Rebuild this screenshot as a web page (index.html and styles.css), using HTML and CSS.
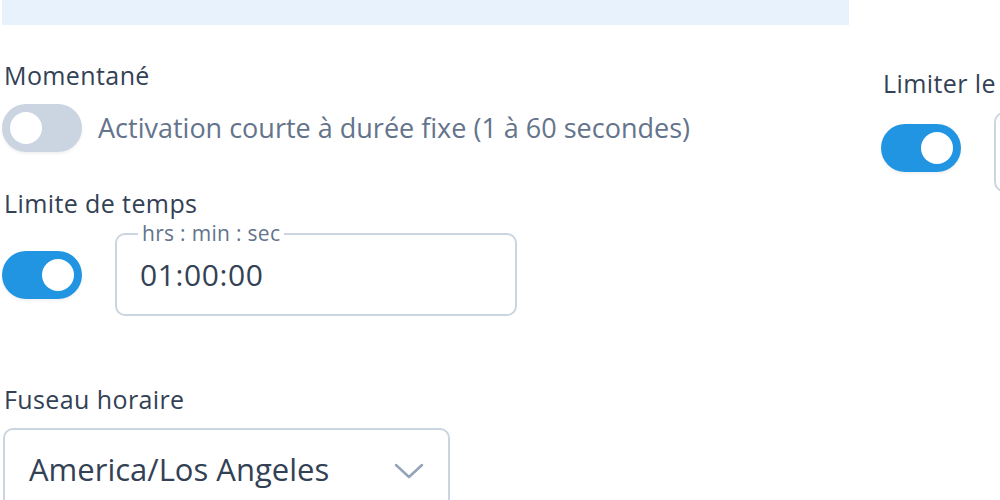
FILE: index.html
```html
<!DOCTYPE html>
<html lang="fr">

<head>
    <meta charset="UTF-8">
    <meta name="viewport" content="width=device-width, initial-scale=1.0">
    <title>Planification</title>

    <link rel="stylesheet" href="styles.css">
</head>

<body>

    <div class="page">

        <div class="main">
            <div class="band"></div>

            <div class="label label-first">Momentané</div>
            <div class="row row-momentary">
                <span class="toggle"><span class="knob"></span></span>
                <span class="hint">Activation courte à durée fixe (1 à 60 secondes)</span>
            </div>

            <div class="label label-limit">Limite de temps</div>
            <div class="row row-limit">
                <span class="toggle on"><span class="knob"></span></span>
                <div class="box time-box">
                    <span class="legend">hrs : min : sec</span>
                    <span class="value">01:00:00</span>
                </div>
            </div>

            <div class="label label-zone">Fuseau horaire</div>
            <div class="box select-box">
                <span class="value value-select">America/Los Angeles</span>
                <svg class="chevron" width="30" height="16" viewBox="0 0 30 16">
                    <path d="M2 2 L15 14 L28 2" fill="none" stroke="#94a3b8" stroke-width="2.5" stroke-linecap="round" stroke-linejoin="round" />
                </svg>
            </div>
        </div>

        <div class="side">
            <div class="label">Limiter le nombre d'activations</div>
            <div class="row row-side">
                <span class="toggle on"><span class="knob"></span></span>
                <div class="box side-box"></div>
            </div>
        </div>

    </div>

</body>

</html>
```

FILE: styles.css
```css
body {
    margin: 0;
    background-color: white;
    font-family: "Open Sans", "Lato", sans-serif;
    color: #334155;
    overflow: hidden;
}

.page {
    display: flex;
    gap: 32px;
    padding-left: 2px;
    width: 1200px;
}

.main {
    width: 847px;
    flex-shrink: 0;
}

.band {
    height: 25px;
    background-color: #e8f2fc;
}

.label {
    font-size: 25px;
    line-height: 32px;
    letter-spacing: 0.4px;
    padding-left: 2px;
    white-space: nowrap;
}

.label-first {
    margin-top: 34px;
}

.label-limit {
    margin-top: 35px;
}

.label-zone {
    margin-top: 67px;
}

.row {
    display: flex;
    align-items: center;
    gap: 33px;
}

.row-momentary {
    margin-top: 13px;
    gap: 16px;
}

.row-limit {
    margin-top: 14px;
}

.toggle {
    display: flex;
    align-items: center;
    width: 80px;
    height: 48px;
    padding: 0 8px;
    box-sizing: border-box;
    border-radius: 24px;
    background-color: #cbd5e1;
    box-shadow: 0 2px 3px rgba(15, 23, 42, 0.06);
    flex-shrink: 0;
}

.toggle.on {
    justify-content: flex-end;
    background-color: #2295e2;
}

.knob {
    width: 32px;
    height: 32px;
    border-radius: 50%;
    background-color: white;
}

.hint {
    font-size: 27px;
    line-height: 32px;
    color: #64748b;
    white-space: nowrap;
}

.box {
    position: relative;
    border: 2px solid #cbd5e1;
    border-radius: 10px;
    box-sizing: border-box;
    background-color: white;
}

.time-box {
    display: flex;
    align-items: center;
    width: 402px;
    height: 83px;
    padding-left: 23px;
}

.legend {
    position: absolute;
    top: -14px;
    left: 21px;
    padding: 0 4px;
    font-size: 21px;
    line-height: 24px;
    letter-spacing: 0.3px;
    color: #64748b;
    background-color: white;
}

.value {
    font-size: 30px;
    letter-spacing: 0.6px;
    color: #334155;
}

.value-select {
    font-size: 31px;
    letter-spacing: 0;
}

.select-box {
    display: flex;
    align-items: center;
    justify-content: space-between;
    width: 447px;
    height: 82px;
    margin-top: 13px;
    padding: 0 24px 0 24px;
    margin-left: 1px;
}

.chevron {
    margin-top: 4px;
}

.side {
    padding-top: 67px;
}

.row-side {
    margin-top: 13px;
    align-items: flex-start;
}

.row-side .toggle {
    margin-top: 12px;
}

.side-box {
    width: 300px;
    height: 80px;
}
```
